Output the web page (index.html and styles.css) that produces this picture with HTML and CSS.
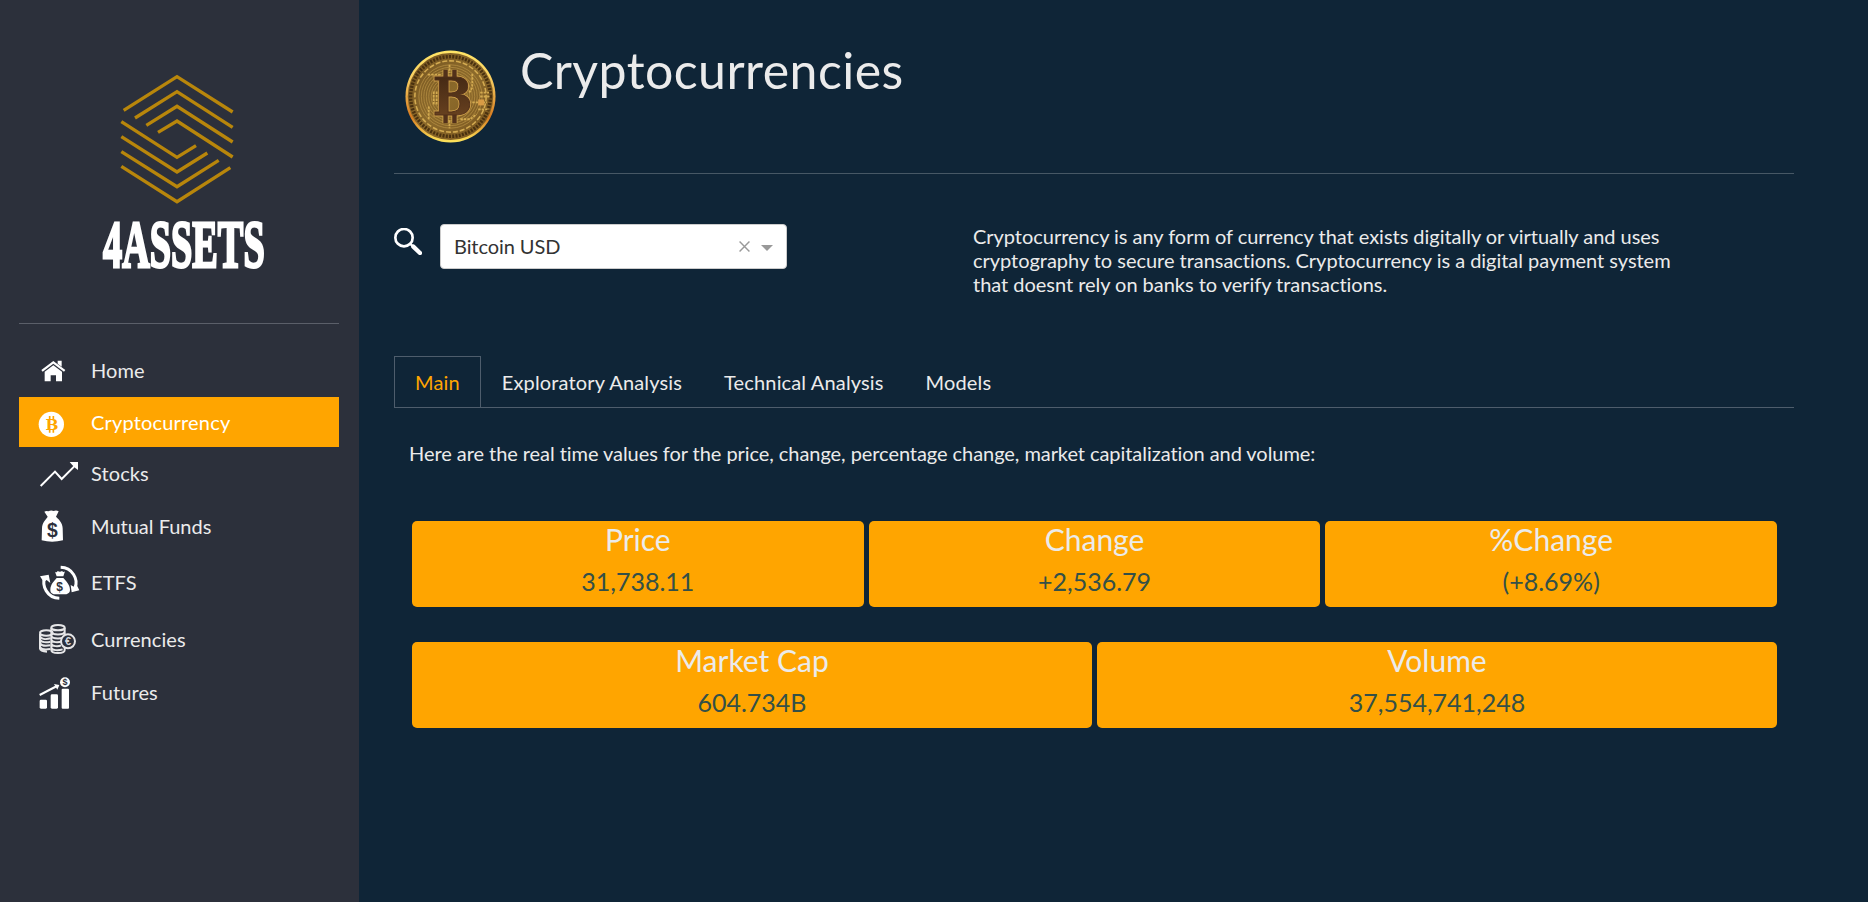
FILE: index.html
```html
<!DOCTYPE html>
<html lang="en">
<head>
<meta charset="utf-8">
<title>4Assets - Cryptocurrencies</title>
<link rel="stylesheet" href="styles.css">
</head>
<body>
<div class="app">
  <aside class="sidebar">
    <svg class="logo" viewBox="0 0 630 660">
      <g class="logo-mark">
        <path d="M131 151 291 50 458 156M165 174 291 95 458 202M199 196 291 139 458 246M234 217 291 183 458 291"/>
        <path d="M124 185 291 292 348 257M124 230 291 336 382 279M124 275 291 380 416 301M124 319 291 425 451 323"/>
      </g>
      <text class="logo-text" x="69" y="620" textLength="485" lengthAdjust="spacingAndGlyphs">4ASSETS</text>
    </svg>
    <nav class="nav">
      <a class="nav-item home"><svg class="icon" viewBox="0 0 120 90"><path d="M7 30 43 3 79 30 75 35 43 11 11 35zM56 2h12v18L56 11zM17 35 43 16 69 35v29H51V46H35v18H17z"/></svg><span>Home</span></a>
      <a class="nav-item active"><svg class="icon" viewBox="0 0 120 90"><circle cx="37" cy="43" r="38"/><text class="coin-b" x="39" y="60" font-size="46">B</text><path class="orange-line" d="M32 18v9M43 18v9M32 58v10M43 58v10"/></svg><span>Cryptocurrency</span></a>
      <a class="nav-item stocks"><svg class="icon" viewBox="0 0 120 90"><path class="line" d="M5 81 48 38 68 60 108 20"/><path d="M92 9h25v24L109 27 99 17z"/></svg><span>Stocks</span></a>
      <a class="nav-item funds"><svg class="icon" viewBox="0 0 120 100"><path d="M16 8q6-4 12-1 8-5 16-1 8-3 15 1L51 23c5 5 20 17 20 35l1 36q-33 8-64 0l1-36C9 41 22 30 26 23z"/><text class="bag-sign" x="40" y="83" font-size="58">$</text></svg><span>Mutual Funds</span></a>
      <a class="nav-item etfs"><svg class="icon" viewBox="0 0 120 110"><path d="M48 20q5 4 8-2 7 5 13 0 5 5 9 1L73 34H53zM53 39h20c7 8 20 20 20 35 0 10-8 14-17 14H51c-10 0-17-4-17-14 0-15 11-26 19-35z"/><text class="bag-sign" x="62" y="78" font-size="36">$</text><path class="arc" d="M17 38C8 62 24 99 61 100M65 7c35 1 54 36 43 61"/><path d="M3 34 29 29 34 54 23 45 14 51zM95 60 106 66 113 59 121 76 98 82z"/></svg><span>ETFS</span></a>
      <a class="nav-item money"><svg class="icon" viewBox="0 0 120 100"><g class="coins"><path d="M3 32v45q1 8 21 9M3 39c4 11 21 10 32 7M3 49c4 10 20 10 31 7M3 60c4 9 20 9 31 7M3 71c4 9 20 9 31 7"/><ellipse cx="22" cy="30" rx="19" ry="8"/><ellipse cx="57" cy="14" rx="20" ry="8"/><path d="M37 14v67c0 12 40 12 40 0V14M37 26c1 11 39 11 40 0M37 38c1 11 39 11 40 0M37 50c1 9 22 9 31 5M37 62c1 9 22 9 29 5M37 74c1 9 22 9 34 5"/></g><circle class="euro-ring" cx="87" cy="55" r="21"/><text class="euro" x="87" y="67" font-size="33">€</text></svg><span>Currencies</span></a>
      <a class="nav-item futures"><svg class="icon" viewBox="0 0 120 100"><rect x="2" y="71" width="22" height="27" rx="4"/><rect x="35" y="55" width="22" height="43" rx="4"/><rect x="68" y="38" width="22" height="60" rx="3"/><path class="line" d="M2 57 54 30"/><path d="M45 24 61 27 55 41z"/><circle cx="78" cy="19" r="15"/><text class="bag-sign" x="78" y="28" font-size="27">$</text></svg><span>Futures</span></a>
    </nav>
  </aside>
  <main class="main">
    <header class="header">
      <svg class="bitcoin" viewBox="0 0 92 94">
        <defs>
          <linearGradient id="rim" x1="0" y1="0" x2="0" y2="1"><stop offset="0" stop-color="#ffe566"/><stop offset=".3" stop-color="#f9cf62"/><stop offset=".72" stop-color="#d67b20"/><stop offset="1" stop-color="#ffe65c"/></linearGradient>
          <linearGradient id="face" x1="0" y1="0" x2="1" y2="1"><stop offset="0" stop-color="#74531f"/><stop offset=".5" stop-color="#8c6a2b"/><stop offset="1" stop-color="#79551f"/></linearGradient>
          <linearGradient id="letter" x1="0" y1="0" x2="0" y2="1"><stop offset="0" stop-color="#3d2412"/><stop offset="1" stop-color="#714722"/></linearGradient>
        </defs>
        <ellipse cx="46" cy="47" rx="45.5" ry="46.5" fill="url(#rim)"/>
        <ellipse cx="46" cy="47" rx="43.2" ry="44" fill="url(#face)"/>
        <g class="engraving">
          <circle class="beads" cx="46" cy="47" r="40.3"/>
          <circle class="dashes" cx="46" cy="47" r="36"/>
          <circle cx="46" cy="47" r="32"/><circle cx="46" cy="47" r="29.5"/><circle cx="46" cy="47" r="27"/><circle cx="46" cy="47" r="24.5"/><circle cx="46" cy="47" r="22"/><circle cx="46" cy="47" r="19.5"/><circle cx="46" cy="47" r="17"/>
          <path class="traces" d="M23 25h14M68 24v14l-3 5M24 57v13M56 70h10l6-5M29 42v13M32 42v13M45 15v8M45 71v8M68 53h15M76 43h9M76 47h10M74 60h11"/>
        </g>
        <path class="mark-glow" d="M41 20v10M50 20v10M41 64v10M50 64v10"/>
        <text class="coin-letter outline" x="28" y="66" textLength="40" lengthAdjust="spacingAndGlyphs">B</text>
        <path class="mark" d="M41 20v10M50 20v10M41 64v10M50 64v10"/>
        <text class="coin-letter" x="28" y="66" textLength="40" lengthAdjust="spacingAndGlyphs" fill="url(#letter)">B</text>
        <rect x="74" y="50" width="6" height="6" fill="#d89b45"/>
      </svg>
      <h1>Cryptocurrencies</h1>
    </header>
    <section class="controls">
      <svg class="search" viewBox="0 0 84 81"><circle cx="30" cy="29" r="26"/><path class="handle-thin" d="M48 47 57 55"/><path class="handle" d="M58 56 78 75"/></svg>
      <div class="select"><span class="select-value">Bitcoin USD</span><svg class="clear" viewBox="0 0 10 10"><path d="M.5.5 9.5 9.5M9.5.5.5 9.5"/></svg><span class="caret"></span></div>
      <p class="about">Cryptocurrency is any form of currency that exists digitally or virtually and uses<br>cryptography to secure transactions. Cryptocurrency is a digital payment system<br>that doesnt rely on banks to verify transactions.</p>
    </section>
    <div class="tabs"><a class="tab current">Main</a><a class="tab">Exploratory Analysis</a><a class="tab">Technical Analysis</a><a class="tab">Models</a></div>
    <p class="intro">Here are the real time values for the price, change, percentage change, market capitalization and volume:</p>
    <div class="cards">
      <div class="card"><h2>Price</h2><p>31,738.11</p></div>
      <div class="card"><h2>Change</h2><p>+2,536.79</p></div>
      <div class="card"><h2>%Change</h2><p>(+8.69%)</p></div>
    </div>
    <div class="cards">
      <div class="card"><h2>Market Cap</h2><p>604.734B</p></div>
      <div class="card"><h2>Volume</h2><p>37,554,741,248</p></div>
    </div>
  </main>
</div>
</body>
</html>
```
FILE: styles.css
```css
* { box-sizing: border-box; }
body { margin: 0; background: #0f2537; color: #ebebeb; font: 400 20px/24px Lato, sans-serif; font-variant-ligatures: none; overflow: hidden; }
h1, h2, p { margin: 0; font-weight: 400; }
.app { display: flex; height: 902px; }
.sidebar { width: 359px; flex: none; padding: 60px 20px 0 19px; background: #2c303b; }
.logo { display: block; width: 210px; height: 220px; margin-left: 61px; overflow: visible; }
.logo-mark { fill: none; stroke: #b8860b; stroke-width: 10; }
.logo-text { font: bold 205px "Liberation Serif", serif; fill: #fff; stroke: #fff; stroke-width: 9; }
.nav { margin-top: 43px; padding-top: 22px; border-top: 1px solid #5b5f69; }
.nav-item { display: flex; align-items: center; height: 51px; padding-left: 20px; letter-spacing: .1px; }
.nav-item span { padding-bottom: 3px; }
.nav-item .icon { width: 40px; flex: none; margin-right: 12px; fill: #fff; overflow: visible; }
.nav-item.home span { padding-bottom: 4px; }
.nav-item.home .icon { margin-top: 7px; }
.nav-item.active { height: 50px; background: #ffa500; color: #fff; letter-spacing: .18px; }
.nav-item.active span { padding-bottom: 1px; }
.nav-item.active .icon { margin-top: 5px; }
.nav-item.stocks { height: 54px; }
.nav-item.funds { height: 52px; letter-spacing: 0; }
.nav-item.funds .icon { margin-bottom: 2px; }
.nav-item.etfs { height: 61px; }
.nav-item.money { height: 52px; }
.nav-item.futures { height: 54px; }
.line { fill: none; stroke: #fff; stroke-width: 6; }
.coin-b, .bag-sign { font-family: "Liberation Sans", sans-serif; font-weight: bold; letter-spacing: 0; text-anchor: middle; fill: #2c303b; }
.coin-b { font-family: "DejaVu Serif", serif; fill: #ffa500; }
.orange-line { stroke: #ffa500; stroke-width: 5; }
.arc { fill: none; stroke: #fff; stroke-width: 9; }
.coins { fill: none; stroke: #e6e6e8; stroke-width: 6; }
.euro-ring { fill: #2c303b; stroke: #e6e6e8; stroke-width: 6; }
.euro { font-family: "Liberation Sans", sans-serif; font-weight: bold; letter-spacing: 0; text-anchor: middle; fill: #d5d5d8; }
.main { width: 1400px; margin-left: 35px; }
.header { display: flex; height: 174px; padding: 50px 0 0 10px; border-bottom: 1px solid #475865; }
.bitcoin { width: 93px; height: 93px; flex: none; }
.header h1 { margin: -10px 0 0 23px; font-size: 50px; line-height: 60px; letter-spacing: .45px; }
.engraving { fill: none; stroke: #b99245; stroke-width: .7; }
.engraving .beads { stroke: #49300f; stroke-width: 3.5; stroke-dasharray: 2 1.3; }
.engraving .dashes { stroke: #d3aa50; stroke-width: 1.6; stroke-dasharray: 5 2; }
.engraving .traces { stroke: #d3aa50; stroke-width: 1.8; stroke-dasharray: 2.5 1; }
.mark { stroke: #52301a; stroke-width: 4.5; }
.mark-glow { stroke: #d3aa50; stroke-width: 6; }
.coin-letter { font: bold 52px "DejaVu Serif", serif; stroke: #52301a; stroke-width: 1; }
.coin-letter.outline { fill: none; stroke: #c99b48; stroke-width: 3; }
.controls { display: flex; height: 182px; padding-top: 50px; }
.search { width: 28px; height: 27px; margin: 4px 18px 0 0; fill: none; stroke: #fff; stroke-width: 8; }
.handle-thin { stroke-width: 7; }
.handle { stroke-width: 13; stroke-linecap: round; }
.select { display: flex; align-items: center; width: 347px; height: 45px; padding: 0 13px 0 13px; background: #fff; border: 1px solid #ccc; border-radius: 4px; color: #333; }
.select-value { flex: 1; padding-bottom: 2px; letter-spacing: -.08px; }
.clear { width: 11px; height: 11px; margin: 0 11px 1px 0; stroke: #999; stroke-width: 1.3; }
.caret { margin-top: 3px; border: 6px solid transparent; border-top-color: #999; border-bottom: 0; }
.about { margin: 0 0 0 186px; white-space: nowrap; letter-spacing: -.03px; }
.tabs { display: flex; height: 52px; border-bottom: 1px solid #4e5d6c; }
.tab { height: 52px; padding: 13px 20px 0; border: 1px solid transparent; letter-spacing: .15px; }
.tab.current { color: #ffa500; border-color: #4e5d6c; }
.intro { margin: 33px 0 56px 15px; white-space: nowrap; letter-spacing: -.06px; }
.cards { display: flex; gap: 5px; margin: 0 17px 35px 18px; }
.card { flex: 1; height: 86px; background: #ffa500; border-radius: 5px; text-align: center; }
.card h2 { font-size: 30px; line-height: 36px; }
.card p { margin-top: 9px; color: #335048; font-size: 25px; line-height: 30px; }
```
